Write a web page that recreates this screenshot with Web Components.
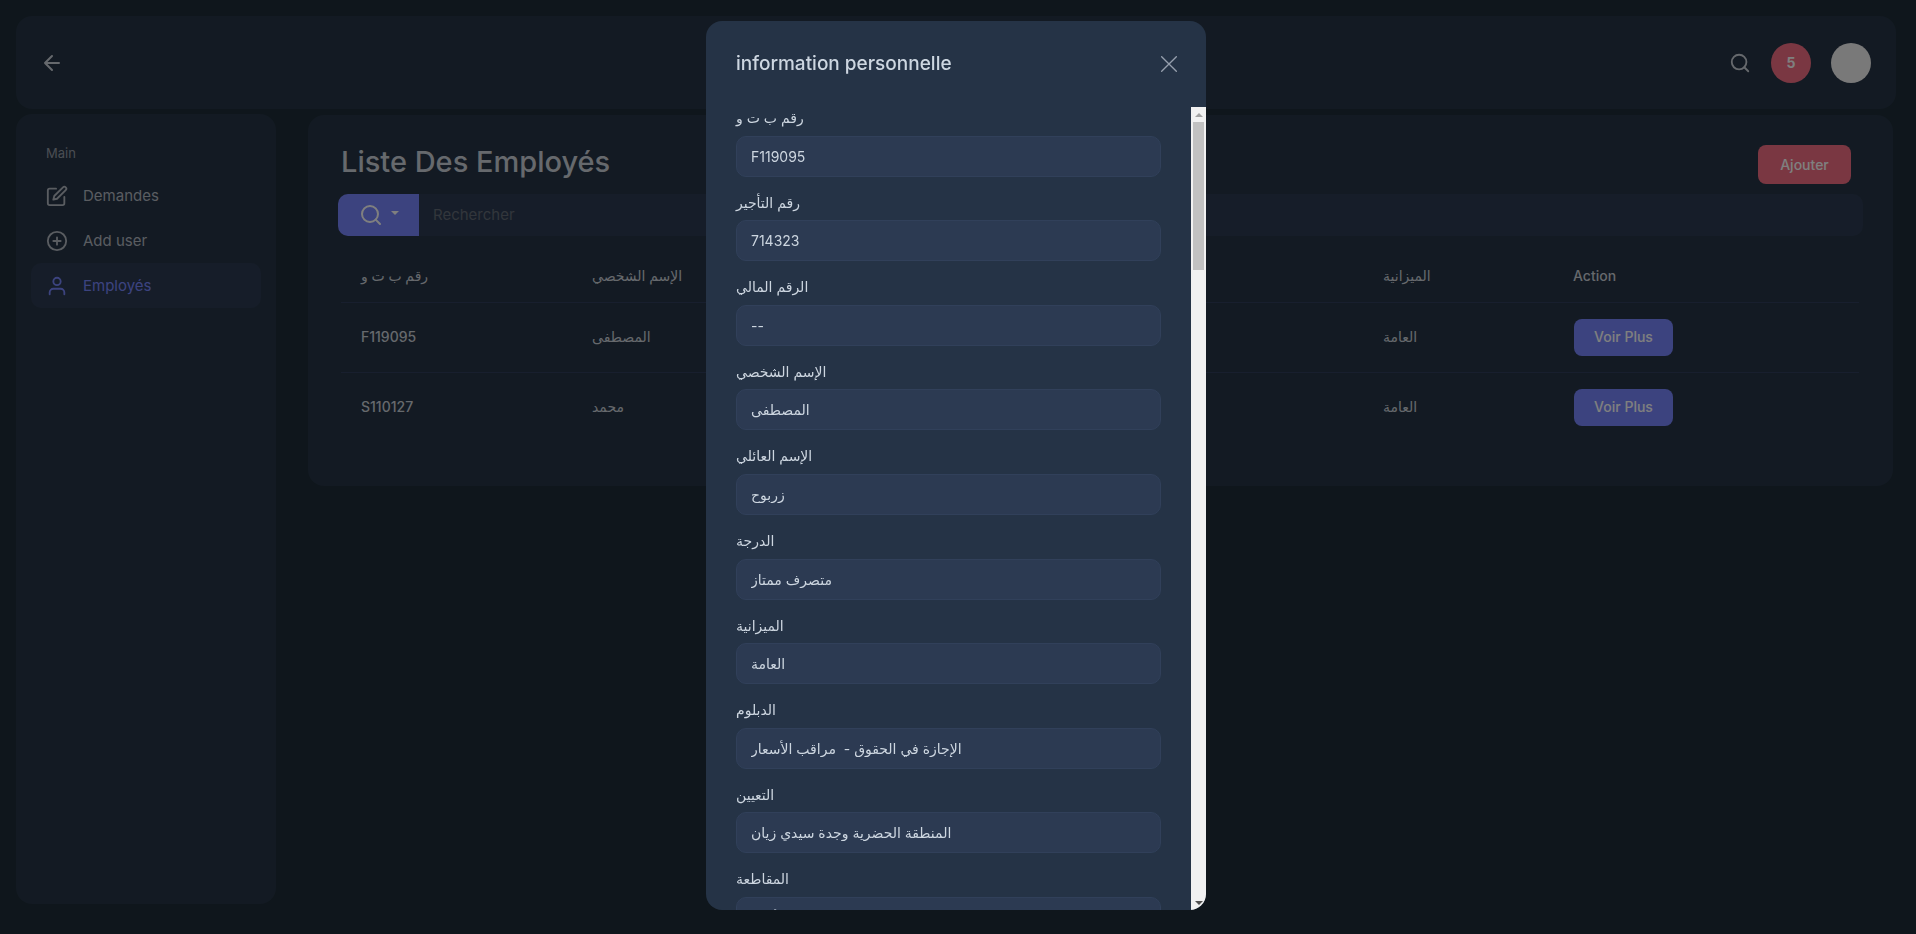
<!DOCTYPE html>
<html lang="fr">
<head>
<meta charset="utf-8">
<meta name="viewport" content="width=device-width, initial-scale=1">
<title>Liste Des Employés</title>
<style>
  :root {
    --page: #1e2d38;
    --card: #273546;
    --field: #2d3b52;
    --line: #303f5c;
    --text: #ccd2da;
    --muted: #b4bac3;
    --primary: #7987ff;
    --danger: #f46f84;
  }
  html, body { margin: 0; min-height: 100vh; background: var(--page); }
  body { font: 400 14px/20px Inter, "DejaVu Sans", sans-serif; color: var(--text); }
</style>
</head>
<body>
<app-shell>
  <app-header slot="header" count="5"></app-header>
  <side-nav slot="nav" heading="Main">
    <nav-item icon="edit" label="Demandes"></nav-item>
    <nav-item icon="plus" label="Add user"></nav-item>
    <nav-item icon="user" label="Employés" active></nav-item>
  </side-nav>
  <employee-list></employee-list>
</app-shell>
<modal-dialog heading="information personnelle">
  <form-field label="رقم ب ت و" value="F119095"></form-field>
  <form-field label="رقم التأجير" value="714323"></form-field>
  <form-field label="الرقم المالي" value="--"></form-field>
  <form-field label="الإسم الشخصي" value="المصطفى"></form-field>
  <form-field label="الإسم العائلي" value="زربوح"></form-field>
  <form-field label="الدرجة" value="متصرف ممتاز"></form-field>
  <form-field label="الميزانية" value="العامة"></form-field>
  <form-field label="الدبلوم" value="الإجازة في الحقوق -  مراقب الأسعار"></form-field>
  <form-field label="التعيين" value="المنطقة الحضرية وجدة سيدي زيان"></form-field>
  <form-field label="المقاطعة" value="أنكاد"></form-field>
</modal-dialog>

<script>
const define = (name, render) => customElements.define(name, class extends HTMLElement {
  connectedCallback() {
    if (this.shadowRoot) return;
    const root = this.attachShadow({ mode: 'open' });
    root.innerHTML = '<style>*{box-sizing:border-box}button,input{font:inherit;color:inherit;margin:0}button{cursor:pointer;border:0}</style>' + render(this);
  }
});
const attr = (el, name) => (el.getAttribute(name) || '').replace(/"/g, '&quot;');

const shapes = {
  back: '<path d="M19 12H5M12 19l-7-7 7-7"/>',
  search: '<circle cx="11" cy="11" r="8"/><path d="M21 21l-4.35-4.35"/>',
  edit: '<path d="M11 4H4a2 2 0 0 0-2 2v14a2 2 0 0 0 2 2h14a2 2 0 0 0 2-2v-7"/><path d="M18.5 2.5a2.121 2.121 0 0 1 3 3L12 15l-4 1 1-4z"/>',
  plus: '<circle cx="12" cy="12" r="10"/><path d="M12 8v8M8 12h8"/>',
  user: '<path d="M20 21v-2a4 4 0 0 0-4-4H8a4 4 0 0 0-4 4v2"/><circle cx="12" cy="7" r="4"/>',
  close: '<path d="M1 1l22 22M23 1L1 23"/>'
};

define('ui-icon', el => `
  <style>
    :host { display: block; flex: none; }
    svg { display: block; fill: none; stroke: currentColor; stroke-linecap: round; stroke-linejoin: round; }
  </style>
  <svg width="${attr(el, 'size')}" height="${attr(el, 'size')}" viewBox="0 0 24 24" stroke-width="${attr(el, 'stroke') || 2}" aria-hidden="true">${shapes[el.getAttribute('name')]}</svg>`);

define('app-shell', () => `
  <style>
    :host { display: flex; flex-direction: column; gap: 5px; padding: 16px 20px 30px 16px; min-height: 100vh; box-sizing: border-box; }
    .row { flex: 1; display: flex; gap: 32px; padding-right: 3px; }
    main { flex: 1; min-width: 0; padding-top: 1px; }
  </style>
  <slot name="header"></slot>
  <div class="row"><slot name="nav"></slot><main><slot></slot></main></div>`);

define('app-header', el => `
  <style>
    :host { display: block; }
    header { display: flex; align-items: center; height: 93px; padding: 0 25px 0 24px; border-radius: 16px; background: var(--card); }
    button { display: grid; place-items: center; padding: 0; background: none; color: var(--text); }
    .tools { display: flex; align-items: center; gap: 20px; margin-left: auto; }
    .round { width: 40px; height: 40px; border-radius: 50%; }
    .count { background: var(--danger); color: #fff; font-weight: 700; }
    .avatar { background: #f2f2f2; }
  </style>
  <header>
    <button aria-label="Retour"><ui-icon name="back" size="24"></ui-icon></button>
    <div class="tools">
      <button aria-label="Rechercher"><ui-icon name="search" size="22"></ui-icon></button>
      <button class="round count">${attr(el, 'count')}</button>
      <button class="round avatar" aria-label="Profil"></button>
    </div>
  </header>`);

define('side-nav', el => `
  <style>
    :host { display: block; flex: none; width: 260px; box-sizing: border-box; padding: 29px 15px; border-radius: 16px; background: var(--card); }
    h2 { margin: 0 0 10px; padding: 0 15px; font-size: 13px; line-height: 20px; font-weight: 400; color: #959ca7; }
  </style>
  <h2>${attr(el, 'heading')}</h2>
  <nav><slot></slot></nav>`);

define('nav-item', el => `
  <style>
    :host { display: block; }
    a { display: flex; align-items: center; gap: 15px; height: 45px; padding: 0 15px; border-radius: 10px; font-size: 15px; color: var(--muted); text-decoration: none; }
    :host([active]) a { background: var(--field); color: var(--primary); }
  </style>
  <a href="#"><ui-icon name="${attr(el, 'icon')}" size="22"></ui-icon>${attr(el, 'label')}</a>`);

define('employee-list', () => {
  const people = [['F119095', 'المصطفى', 'العامة'], ['S110127', 'محمد', 'العامة']];
  return `
  <style>
    :host { display: block; padding: 30px 30px 44px; border-radius: 16px; background: var(--card); }
    .top { display: flex; justify-content: space-between; height: 49px; padding: 0 12px 0 3px; }
    h1 { margin: 0; font-size: 29px; line-height: 33px; font-weight: 500; }
    .add { height: 39px; width: 93px; padding: 0; border-radius: 8px; background: var(--danger); color: #fff; font-weight: 500; }
    .search { display: flex; height: 42px; border-radius: 10px; background: var(--field); overflow: hidden; }
    .search button { display: flex; align-items: center; gap: 8px; padding: 0 20px 0 21px; background: var(--primary); color: #fff; }
    .caret { border: 4px solid transparent; border-top-color: currentColor; border-bottom: 0; margin-bottom: 4px; }
    input { flex: 1; min-width: 0; padding: 0 14px; border: 0; background: none; font-size: 15px; }
    input::placeholder { color: #646d78; opacity: 1; }
    table { width: calc(100% - 7px); margin: 14px 4px 0 3px; border-collapse: collapse; table-layout: fixed; }
    th, td { padding: 0 20px; text-align: left; font-weight: 500; }
    th { height: 52px; border-bottom: 1px solid var(--line); }
    td { height: 70px; }
    tbody tr + tr td { border-top: 1px solid var(--line); }
    td[lang] { font-weight: 400; }
    td button { display: block; width: 99px; height: 37px; margin-left: 1px; padding: 0; border-radius: 8px; background: var(--primary); color: #fff; font-weight: 500; }
    .id { width: 231px; } .budget { width: 190px; } .action { width: 306px; }
  </style>
  <div class="top"><h1>Liste Des Employés</h1><button class="add">Ajouter</button></div>
  <div class="search">
    <button aria-label="Filtrer"><ui-icon name="search" size="24"></ui-icon><span class="caret"></span></button>
    <input type="text" placeholder="Rechercher" aria-label="Rechercher">
  </div>
  <table>
    <colgroup><col class="id"><col><col class="budget"><col class="action"></colgroup>
    <thead><tr><th>رقم ب ت و</th><th>الإسم الشخصي</th><th>الميزانية</th><th>Action</th></tr></thead>
    <tbody>${people.map(([id, name, budget]) => `<tr><td>${id}</td><td lang="ar">${name}</td><td lang="ar">${budget}</td><td><button>Voir Plus</button></td></tr>`).join('')}</tbody>
  </table>`;
});

define('modal-dialog', el => `
  <style>
    :host { position: fixed; inset: 0; display: flex; justify-content: center; padding: 21px 4px 24px 0; background: rgba(0, 0, 0, .5); }
    section { display: flex; flex-direction: column; width: 500px; max-width: 100%; border-radius: 16px; background: #253346; overflow: hidden; }
    header { display: flex; flex: none; align-items: center; justify-content: space-between; height: 86px; padding: 0 29px 0 30px; }
    h2 { margin: 0; font-size: 19px; line-height: 28px; font-weight: 500; color: #cdd6e0; }
    button { padding: 0; background: none; color: #969fad; }
    .body { flex: 1; min-height: 0; display: flex; }
    .scroll { flex: 1; min-width: 0; overflow-y: auto; scrollbar-width: none; padding: 1px 30px 30px; }
    .bar { flex: none; width: 15px; display: flex; flex-direction: column; align-items: center; padding: 6px 0 5px; background: #f1f1f1; }
    .thumb { width: 11px; height: 148px; margin: 5px 0 auto; background: #c1c1c1; }
    .up, .down { border: 4px solid transparent; }
    .up { border-top: 0; border-bottom-color: #a3a3a3; }
    .down { border-bottom: 0; border-top-color: #505050; }
  </style>
  <section role="dialog" aria-modal="true" aria-labelledby="title">
    <header><h2 id="title">${attr(el, 'heading')}</h2><button aria-label="Fermer"><ui-icon name="close" size="16" stroke="2"></ui-icon></button></header>
    <div class="body">
      <div class="scroll"><slot></slot></div>
      <div class="bar" aria-hidden="true"><span class="up"></span><span class="thumb"></span><span class="down"></span></div>
    </div>
  </section>`);

define('form-field', el => `
  <style>
    :host { display: block; margin-bottom: 16px; }
    label { display: block; margin-bottom: 8px; font-size: 14px; line-height: 1.4; color: #cdd6e0; }
    input { display: block; width: 100%; height: 41px; padding: 0 14px; border: 1px solid #31405a; border-radius: 10px; background: #2c3a52; color: #cdd6e0; }
  </style>
  <label for="field">${attr(el, 'label')}</label>
  <input id="field" type="text" value="${attr(el, 'value')}" readonly>`);
</script>
</body>
</html>
